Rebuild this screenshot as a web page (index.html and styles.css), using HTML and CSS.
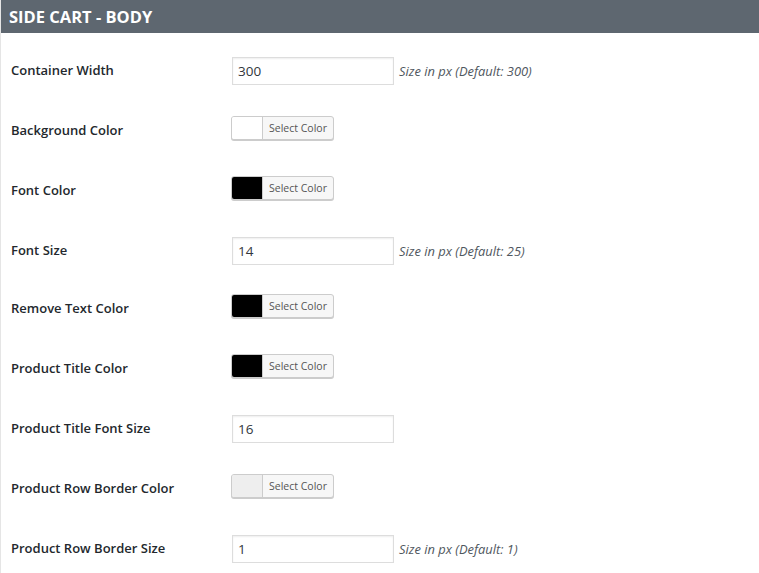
FILE: index.html
```html
<!DOCTYPE html>
<html>
<head>
<meta charset="utf-8">
<link rel="stylesheet" href="styles.css">
</head>
<body>
<div class="panel">
  <h2 class="panel-title">SIDE CART - BODY</h2>
  <div class="rows">
    <div class="row">
      <div class="label">Container Width</div>
      <div class="field field-text"><input class="text-input" type="text" value="300"><span class="desc">Size in px (Default: 300)</span></div>
    </div>
    <div class="row">
      <div class="label">Background Color</div>
      <div class="field field-color"><button class="color-btn"><span class="swatch swatch-white"></span><span class="color-text">Select Color</span></button></div>
    </div>
    <div class="row">
      <div class="label">Font Color</div>
      <div class="field field-color"><button class="color-btn"><span class="swatch swatch-black"></span><span class="color-text">Select Color</span></button></div>
    </div>
    <div class="row row-short">
      <div class="label">Font Size</div>
      <div class="field field-text"><input class="text-input" type="text" value="14"><span class="desc">Size in px (Default: 25)</span></div>
    </div>
    <div class="row">
      <div class="label">Remove Text Color</div>
      <div class="field field-color"><button class="color-btn"><span class="swatch swatch-black"></span><span class="color-text">Select Color</span></button></div>
    </div>
    <div class="row">
      <div class="label">Product Title Color</div>
      <div class="field field-color"><button class="color-btn"><span class="swatch swatch-black"></span><span class="color-text">Select Color</span></button></div>
    </div>
    <div class="row">
      <div class="label">Product Title Font Size</div>
      <div class="field field-text"><input class="text-input" type="text" value="16"></div>
    </div>
    <div class="row">
      <div class="label">Product Row Border Color</div>
      <div class="field field-color"><button class="color-btn"><span class="swatch swatch-grey"></span><span class="color-text">Select Color</span></button></div>
    </div>
    <div class="row">
      <div class="label">Product Row Border Size</div>
      <div class="field field-text"><input class="text-input" type="text" value="1"><span class="desc">Size in px (Default: 1)</span></div>
    </div>
  </div>
</div>
</body>
</html>
```
FILE: styles.css
```css
html, body {
  margin: 0;
  padding: 0;
  background: #ffffff;
}
body {
  font-family: "Open Sans", "Noto Sans", sans-serif;
  color: #23282d;
  width: 759px;
  height: 573px;
  overflow: hidden;
}
.panel {
  border-left: 1px solid #e5e5e5;
  height: 573px;
}
.panel-title {
  margin: 0;
  height: 33px;
  line-height: 33px;
  padding-left: 8px;
  background: #5e6770;
  color: #ffffff;
  font-size: 16.5px;
  font-weight: 700;
}
.rows {
  padding-top: 7px;
}
.row {
  display: flex;
  height: 60px;
}
.row-short {
  height: 58px;
}
.label {
  flex: none;
  width: 231px;
  padding-left: 10px;
  box-sizing: border-box;
  padding-top: 21px;
  font-size: 13px;
  line-height: 18px;
  font-weight: 600;
  color: #23282d;
}
.field {
  display: flex;
  align-items: center;
}
.field-text {
  padding-top: 17px;
  height: 28px;
}
.field-color {
  padding-top: 16px;
  height: 24px;
}
.text-input {
  box-sizing: border-box;
  width: 162px;
  height: 28px;
  margin: 0;
  padding: 0 5px;
  border: 1px solid #dddddd;
  box-shadow: inset 0 1px 2px rgba(0,0,0,0.07);
  background: #ffffff;
  font-family: inherit;
  font-size: 13.5px;
  color: #32373c;
  outline: none;
}
.desc {
  margin-left: 5px;
  font-size: 12.9px;
  font-style: italic;
  color: #50575e;
}
.color-btn {
  display: flex;
  align-items: stretch;
  box-sizing: border-box;
  height: 24px;
  width: 103px;
  margin: 0 0 0 -1px;
  padding: 0;
  border: 1px solid #cccccc;
  border-radius: 3px;
  box-shadow: 0 1px 0 #cccccc;
  background: #f7f7f7;
  overflow: hidden;
  font-family: inherit;
  cursor: pointer;
}
.swatch {
  width: 30px;
  border-right: 1px solid #cccccc;
}
.swatch-white { background: #ffffff; }
.swatch-black { background: #000000; }
.swatch-grey { background: #eeeeee; }
.color-text {
  flex: 1;
  display: flex;
  align-items: center;
  justify-content: center;
  font-size: 10.5px;
  color: #555555;
}
```
